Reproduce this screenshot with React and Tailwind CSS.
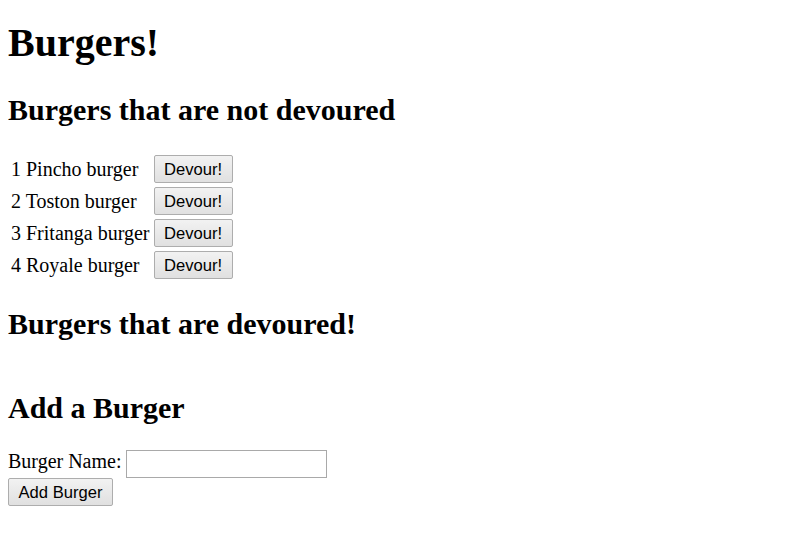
import React from "react";

const burgers = ["Pincho burger", "Toston burger", "Fritanga burger", "Royale burger"];

const btn =
  "font-['Liberation_Sans',Arial,sans-serif] text-[16.6px] leading-[19px] text-black px-[9.5px] h-[28px] border border-[#adadad] rounded-[2px] bg-gradient-to-b from-[#f2f2f2] to-[#e0e0e0]";

export default function App() {
  return (
    <div className="p-2 font-['Liberation_Serif','Times_New_Roman',serif] text-black bg-white min-h-[546px]">
      <h1 className="mt-[12px] text-[40px] leading-[46px] font-bold">Burgers!</h1>
      <h2 className="mt-[27px] text-[30px] leading-[34px] font-bold">Burgers that are not devoured</h2>
      <table className="mt-[25px] border-separate border-spacing-[2px] text-[20px] leading-[23px]">
        <tbody>
          {burgers.map((b, i) => (
            <tr key={b}>
              <td className="p-px align-middle">
                {i + 1} {b}
              </td>
              <td className="p-px align-middle">
                <button className={btn}>Devour!</button>
              </td>
            </tr>
          ))}
        </tbody>
      </table>
      <h2 className="mt-[25px] text-[30px] leading-[34px] font-bold">Burgers that are devoured!</h2>
      <h2 className="mt-[50px] text-[30px] leading-[34px] font-bold">Add a Burger</h2>
      <div className="mt-[25px] flex items-start gap-[4px]">
        <label className="text-[20px] leading-[23px]">Burger Name:</label>
        <input
          type="text"
          className="w-[201px] h-[28px] border border-[#a9a9a9] bg-white"
        />
      </div>
      <button className={btn}>Add Burger</button>
    </div>
  );
}
